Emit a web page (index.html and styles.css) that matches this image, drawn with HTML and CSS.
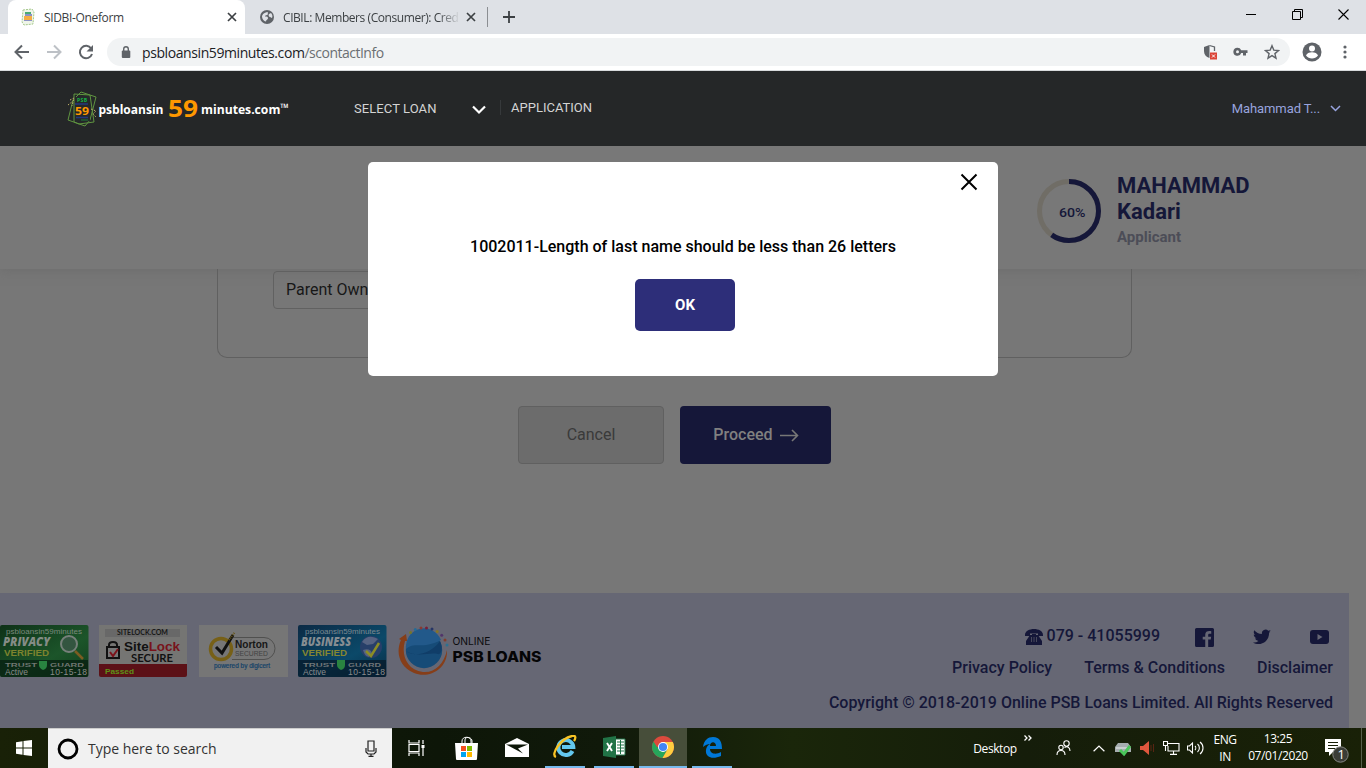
FILE: index.html
```html
<!DOCTYPE html>
<html lang="en">
<head>
<meta charset="utf-8">
<title>SIDBI-Oneform</title>
<link rel="stylesheet" href="styles.css">
</head>
<body>
<div class="screen">
<header class="tabs">
  <div class="tab active">
    <svg width="16" height="18" viewBox="0 0 16 18"><path d="M3 2l9-1 2 3-1 12-9 1-2-3z" fill="#eff5e8" stroke="#a5c88b" stroke-dasharray="2 1"/><path d="M5 4h6v2H5z" fill="#48ac73"/><path d="M5 6h7v2H5z" fill="#8c92c5"/><path d="M4 8h8v4H4z" fill="#f5ad43"/><path d="M4 12h8v1H4z" fill="#8c92c5"/></svg>
    <span class="title t1">SIDBI-Oneform</span>
    <svg class="x" width="10" height="10" viewBox="0 0 10 10"><path d="M1 1l8 8M9 1l-8 8" stroke="#3c4043" stroke-width="1.7"/></svg>
  </div>
  <div class="tab idle">
    <svg width="14" height="14" viewBox="0 0 14 14"><circle cx="7" cy="7" r="7" fill="#5f6368"/><path d="M2 6c1-3 4-4 6-4-1 1 1 2-1 3-1 .5-2 .2-2 1.500 2 0 3 0 3 2 0 1-2 1-2 3C3 11 2 8 2 6zM9 4l2-1c1 1 2 3 1 5-1 0-1-1-2-1S8 5 9 4z" fill="#dee1e6"/></svg>
    <span class="title t2">CIBIL: Members (Consumer): Cred</span>
    <svg class="x" width="10" height="10" viewBox="0 0 10 10"><path d="M1 1l8 8M9 1l-8 8" stroke="#3c4043" stroke-width="1.7"/></svg>
  </div>
  <i class="tabsep"></i>
  <svg class="plus" width="12" height="12" viewBox="0 0 12 12"><path d="M6 0v12M0 6h12" stroke="#3c4043" stroke-width="1.8"/></svg>
  <div class="winctl">
    <span><svg width="10" height="10" viewBox="0 0 10 10"><path d="M0 5.500h10" stroke="#000"/></svg></span>
    <span><svg width="11" height="11" viewBox="0 0 11 11" fill="none" stroke="#000"><path d="M.5 2.500h8v8h-8zM2.500 2V.5h8v8H9"/></svg></span>
    <span><svg width="11" height="11" viewBox="0 0 11 11"><path d="M.5.5l10 10M10.500.5l-10 10" stroke="#000" stroke-width="1.1"/></svg></span>
  </div>
</header>
<div class="toolbar">
  <span class="tb"><svg width="16" height="16" viewBox="0 0 16 16" fill="none" stroke="#5f6368" stroke-width="2"><path d="M15 8H2M8 1.500L1.500 8 8 14.500"/></svg></span>
  <span class="tb"><svg width="16" height="16" viewBox="0 0 16 16" fill="none" stroke="#bdc1c6" stroke-width="2"><path d="M1 8h13M8 1.500L14.500 8 8 14.500"/></svg></span>
  <span class="tb"><svg width="16" height="16" viewBox="0 0 16 16"><path d="M13.200 4.500A6.200 6.200 0 1 0 14 10" fill="none" stroke="#5f6368" stroke-width="2"/><path d="M15 1v6.500H8.500z" fill="#5f6368"/></svg></span>
  <div class="omni">
    <svg width="10" height="13" viewBox="0 0 10 13"><rect y="4.500" x=".8" width="8.500" height="7.500" rx="1" fill="#5f6368"/><path d="M2.700 5V3a2.300 2.300 0 0 1 4.600 0v2" fill="none" stroke="#5f6368" stroke-width="1.400"/></svg>
    <span class="url"><b>psbloansin59minutes.com</b>/scontactInfo</span>
    <span class="oi"><svg width="14" height="16" viewBox="0 0 14 16"><path d="M6.500 1L1 3v4c0 3.500 2 6 5.500 7z" fill="#5f6368"/><path d="M6.500 1.500L11.500 3v4" fill="none" stroke="#5f6368" stroke-width="1.300"/><path d="M7 8.500h7v7H7z" fill="#db4437"/><path d="M9 10.500l3 3m0-3l-3 3" stroke="#fff"/></svg></span>
    <span class="oi"><svg width="15" height="10" viewBox="0 0 15 10"><path d="M4.500.8A4 4 0 1 0 8.200 6H10v2.500h3V6h1.500V3.200H8.200A4 4 0 0 0 4.500.8z" fill="#5f6368"/><circle cx="4.500" cy="4.700" r="1.500" fill="#f1f3f4"/></svg></span>
    <span class="oi"><svg width="16" height="16" viewBox="0 0 16 16"><path d="M8 1.700l1.800 4.400 4.700.4-3.600 3.100 1.100 4.600L8 11.700l-4 2.500 1.100-4.600L1.500 6.500l4.700-.4z" fill="none" stroke="#5f6368" stroke-width="1.400"/></svg></span>
  </div>
  <svg class="avatar" width="20" height="20" viewBox="0 0 20 20"><circle cx="10" cy="10" r="9.500" fill="#5f6368"/><circle cx="10" cy="6.500" r="3" fill="#fff"/><path d="M4 13.500c1-4.500 11-4.500 12 0a7.500 7.500 0 0 1-12 0z" fill="#fff"/></svg>
  <svg class="dots" width="4" height="14" viewBox="0 0 4 14" fill="#5f6368"><circle cx="2" cy="2" r="1.600"/><circle cx="2" cy="7" r="1.600"/><circle cx="2" cy="12" r="1.600"/></svg>
</div>
<nav class="nav">
  <svg class="logo" width="224" height="38" viewBox="0 0 224 38">
    <g fill="none" stroke="#5f9440"><path d="M7 4l16 1 4 27-15 2-5-2z"/><path d="M9 7l5-5 15 5-6 23-5 6-17-6 5-20"/><path d="M3 10l4-2-2 8M1 15l5-4M24 19l5 2-3 3 3 3" stroke-dasharray="1.500 1.500" stroke="#c6b56b"/></g>
    <path d="M9 7h13l1 24-14 1z" fill="#25282a"/>
    <text x="10" y="12" class="lf" font-size="5" textLength="10" fill="#15b645">PSB</text>
    <path d="M8 14h13M9 27.500h12" stroke="#24377c" stroke-width="1.500"/><path d="M14 30h7" stroke="#1f7d39"/>
    <text x="8" y="24.500" class="lf" font-size="11" textLength="14" lengthAdjust="spacingAndGlyphs" fill="#ff9800">59</text>
    <text x="31.500" y="24" class="lf" font-size="13" textLength="65" lengthAdjust="spacingAndGlyphs" fill="#fff">psbloansin</text>
    <text x="101" y="26.500" class="lf" font-size="24" textLength="30" lengthAdjust="spacingAndGlyphs" fill="#ff9800">59</text>
    <text x="134" y="24" class="lf" font-size="13" textLength="88" lengthAdjust="spacingAndGlyphs" fill="#fff">minutes.com<tspan font-size="12" dy="-2">™</tspan></text>
  </svg>
  <span class="select">SELECT LOAN</span>
  <svg class="chev" width="14" height="10" viewBox="0 0 14 10"><path d="M1 1.500l6 6 6-6" fill="none" stroke="#fff" stroke-width="2.200"/></svg>
  <span class="app">APPLICATION</span>
  <span class="user">Mahammad T...</span>
  <svg width="11" height="7" viewBox="0 0 11 7"><path d="M1 1l4.500 4.500L10 1" fill="none" stroke="#98a4df" stroke-width="1.500"/></svg>
</nav>
<main class="page">
  <section class="profile">
    <svg width="66" height="66" viewBox="0 0 66 66"><circle cx="33" cy="33" r="29.500" fill="none" stroke="#706d66" stroke-width="5"/><circle cx="33" cy="33" r="29.500" fill="none" stroke="#151739" stroke-width="5" pathLength="100" stroke-dasharray="60 40" transform="rotate(-90 33 33)"/><text x="23" y="39" class="pct" textLength="26.500" lengthAdjust="spacingAndGlyphs">60%</text></svg>
    <div class="who"><strong>MAHAMMAD<br>Kadari</strong><span>Applicant</span></div>
  </section>
  <section class="card"><div class="field">Parent Owned</div></section>
  <div class="actions">
    <button class="cancel">Cancel</button>
    <button class="proceed">Proceed <svg width="19" height="13" viewBox="0 0 19 13"><path d="M0 6.500h17.500M12 1l5.500 5.500L12 12" fill="none" stroke="#777" stroke-width="1.600"/></svg></button>
  </div>
  <div class="modal">
    <svg class="close" width="18" height="18" viewBox="0 0 18 18"><path d="M1.500 1.500l15 15M16.500 1.500l-15 15" stroke="#000" stroke-width="2"/></svg>
    <p>1002011-Length of last name should be less than 26 letters</p>
    <button>OK</button>
  </div>
</main>
<footer class="footer">
  <div class="badges">
    <svg width="89" height="52" viewBox="0 0 89 52">
      <defs><linearGradient id="g" x2="1" y2="1"><stop offset="0" stop-color="#0d3117"/><stop offset=".6" stop-color="#1c552a"/><stop offset="1" stop-color="#123e1d"/></linearGradient><linearGradient id="b" x2="1" y2="1"><stop offset="0" stop-color="#0b2a45"/><stop offset=".6" stop-color="#0b4969"/><stop offset="1" stop-color="#092c45"/></linearGradient></defs>
      <rect width="88.500" height="52" rx="2" fill="url(#g)"/><path d="M0 35h88v15q0 2-2 2H2q-2 0-2-2z" fill="#071d10" opacity=".75"/>
      <text class="ls" x="6" y="8.500" font-size="8" textLength="76" fill="#7b8a7d">psbloansin59minutes</text>
      <text class="imp" x="3" y="21" font-size="12.500" textLength="47" lengthAdjust="spacingAndGlyphs" fill="#858c86">PRIVACY</text>
      <text class="lb" x="4" y="30.500" font-size="9" textLength="45" lengthAdjust="spacingAndGlyphs" fill="#7d842e">VERIFIED</text>
      <circle cx="69" cy="19" r="8" fill="#335540" stroke="#76807a" stroke-width="2"/><path d="M75 26l8 8" stroke="#7b5d22" stroke-width="2.500"/>
      <text class="lb" x="5" y="41.500" font-size="6" textLength="32" lengthAdjust="spacingAndGlyphs" fill="#707671">TRUST</text><path d="M39 36h8v4q0 4-4 5-4-2-4-5z" fill="#298340"/><text class="lb" x="50" y="41.500" font-size="6" textLength="34" lengthAdjust="spacingAndGlyphs" fill="#707671">GUARD</text>
      <text class="ls" x="5" y="50" font-size="8.500" textLength="23" fill="#8a8c8a">Active</text><text class="ls" x="50" y="50" font-size="8.500" textLength="37" fill="#8a8c8a">10-15-18</text>
    </svg>
    <svg width="88" height="52" viewBox="0 0 88 52">
      <path d="M0 0h88v40H0z" fill="#757573"/><path d="M6 4h75v8H6z" fill="#686868"/><path d="M0 39h88v11q0 2-2 2H2q-2 0-2-2z" fill="#5c1117"/>
      <text class="lt" x="18" y="10" font-size="7" textLength="51" lengthAdjust="spacingAndGlyphs" fill="#171717">SITELOCK.COM</text>
      <rect x="8" y="22" width="12" height="11" fill="#777" stroke="#111" stroke-width="2"/><path d="M10 22v-2c0-4 8-4 8 0v2" fill="none" stroke="#111" stroke-width="2"/><path d="M11 27l3 4 5-7" fill="none" stroke="#7c121a" stroke-width="2"/>
      <text class="lb" x="25" y="26" font-size="12" textLength="56" lengthAdjust="spacingAndGlyphs" fill="#111">Site<tspan fill="#78131b">Lock</tspan></text>
      <text class="lt" x="32" y="37" font-size="11" textLength="42" lengthAdjust="spacingAndGlyphs" fill="#111">SECURE</text>
      <text class="lb" x="6" y="49" font-size="8" textLength="29" lengthAdjust="spacingAndGlyphs" fill="#5e9018">Passed</text>
    </svg>
    <svg class="norton" width="89" height="52" viewBox="0 0 89 52">
      <path d="M0 0h89v52H0z" fill="#767676"/><path d="M33 12.500h32a10.500 10.500 0 0 1 0 22H33" fill="none" stroke="#50504f"/>
      <circle cx="22" cy="24" r="10.500" fill="#767676" stroke="#776017" stroke-width="3.500"/><path d="M17 22l6 6L34 10" fill="none" stroke="#111" stroke-width="3"/><path d="M30 15l6-8" stroke="#675416" stroke-dasharray="1 1" stroke-width="2"/>
      <text class="lb" x="36" y="23" font-size="10.500" textLength="33" lengthAdjust="spacingAndGlyphs" fill="#171717">Norton</text><text class="ls" x="36" y="31" font-size="7" textLength="33" lengthAdjust="spacingAndGlyphs" fill="#424242">SECURED</text><text class="ls" x="15" y="43" font-size="7" textLength="56" lengthAdjust="spacingAndGlyphs" fill="#124168" stroke="#124168" stroke-width=".2">powered by digicert</text>
    </svg>
    <svg width="89" height="52" viewBox="0 0 89 52">
      <rect width="88.500" height="52" rx="2" fill="url(#b)"/><path d="M0 35h88v15q0 2-2 2H2q-2 0-2-2z" fill="#071a29" opacity=".75"/>
      <text class="ls" x="7" y="8.500" font-size="8" textLength="75" fill="#7b8a91">psbloansin59minutes</text>
      <text class="imp" x="3" y="21" font-size="12.500" textLength="50" lengthAdjust="spacingAndGlyphs" fill="#868d92">BUSINESS</text>
      <text class="lb" x="4" y="30.500" font-size="9" textLength="45" lengthAdjust="spacingAndGlyphs" fill="#858631">VERIFIED</text>
      <circle cx="73" cy="22" r="11" fill="#273f69"/><path d="M64 17c5-8 12-5 16-3l-5 5-6 1zM65 25c5-2 8 0 9 3l-3 4c-4-1-5-4-6-7z" fill="#566382"/><path d="M68 26l5 5 8-13" fill="none" stroke="#8b8d26" stroke-width="2.500"/>
      <text class="lb" x="5" y="41.500" font-size="6" textLength="32" lengthAdjust="spacingAndGlyphs" fill="#707679">TRUST</text><path d="M39 35h8v5q0 4-4 5-4-2-4-5z" fill="#298340"/><text class="lb" x="50" y="41.500" font-size="6" textLength="33" lengthAdjust="spacingAndGlyphs" fill="#707679">GUARD</text>
      <text class="ls" x="5" y="50" font-size="8.500" textLength="23" fill="#8a8c8e">Active</text><text class="ls" x="50" y="50" font-size="8.500" textLength="37" fill="#8a8c8e">10-15-18</text>
    </svg>
    <svg class="psb" width="146" height="52" viewBox="0 0 146 52">
      <circle cx="26" cy="25" r="18.200" fill="#164b77"/><path d="M8 24c9-8 16 1 35-9A18.200 18.200 0 0 0 8 24z" fill="#22598a"/><path d="M8 26c9 7 26 2 34-10 4 9 0 14-2 13-10-2-20 4-32-3z" fill="#103d68"/>
      <path d="M1 14l7-5 1 7-2 0C3 29 8 45 25 47c12 1 21-8 24-22C50 44 31 54 16 48 0 41-2 26 3 15z" fill="#863e19"/>
      <circle cx="12.500" cy="7.500" r="1.500" fill="#757728"/><circle cx="17.300" cy="4.600" r="1.500" fill="#246b96"/><circle cx="23" cy="3" r="1.500" fill="#883a31"/><circle cx="28.500" cy="3" r="1.500" fill="#771f39"/><circle cx="34" cy="4" r="1.500" fill="#253465"/><circle cx="39.200" cy="6.600" r="1.500" fill="#847526"/><circle cx="43.700" cy="10.200" r="1.500" fill="#51346a"/><circle cx="47" cy="15" r="1.500" fill="#843d2b"/><circle cx="49" cy="20" r="1.500" fill="#2c7190"/>
      <text class="lo" x="54.500" y="20" font-size="10.500" textLength="38" lengthAdjust="spacingAndGlyphs" fill="#0b0b0d">ONLINE</text><text class="lx" x="54.500" y="37" font-size="14.500" textLength="89" lengthAdjust="spacingAndGlyphs" fill="#050506">PSB LOANS</text>
    </svg>
  </div>
  <div class="info">
    <div class="row social">
      <svg width="18" height="16" viewBox="0 0 18 16" fill="#151739"><path d="M0 6c0-8 18-8 18 0v1h-5V4.500H5V7H0zM5 6h2V5h4v1h2l4 6v4H1v-4z"/><path d="M6.500 8v5M9 8v5M11.500 8v5" stroke="#555765" stroke-width=".8"/></svg>
      <span class="phone">079 - 41055999</span>
      <svg width="19" height="19" viewBox="0 0 18 18"><path d="M1.500 0h15Q18 0 18 1.500v15q0 1.500-1.500 1.500h-4v-7h2.400l.4-2.800h-2.800V6.700c0-1 .4-1.300 1.400-1.300h1.500V3c-3-.5-5.700.1-5.700 3.300v1.900H7.300V11h2.400v7H1.500Q0 18 0 16.500v-15Q0 0 1.500 0z" fill="#151739"/></svg>
      <svg class="tw" width="18" height="16" viewBox="0 0 24 20"><path d="M24 2.400c-.9.400-1.800.7-2.800.8 1-.6 1.800-1.600 2.200-2.700-1 .6-2 1-3.100 1.200A4.900 4.900 0 0 0 11.900 6C7.800 5.900 4.200 3.900 1.700.9.400 3.200 1.100 6 3.200 7.400c-.8 0-1.600-.2-2.200-.6 0 2.300 1.600 4.400 3.900 4.900-.7.200-1.500.2-2.200.1.600 2 2.400 3.300 4.600 3.400A9.900 9.900 0 0 1 0 17.200c8.300 5.300 21.500.4 21.500-13 1-.7 1.800-1.600 2.500-1.800z" fill="#151739"/></svg>
      <svg width="19" height="14" viewBox="0 0 19 14"><rect width="19" height="14" rx="3" fill="#151739"/><path d="M7.500 4l5 3-5 3z" fill="#666774"/></svg>
    </div>
    <div class="row links"><span>Privacy Policy</span><span>Terms &amp; Conditions</span><span>Disclaimer</span></div>
    <div class="row copy">Copyright © 2018-2019 Online PSB Loans Limited. All Rights Reserved</div>
  </div>
</footer>
<div class="taskbar">
  <span class="start"><svg width="16" height="16" viewBox="0 0 16 16" fill="#fff"><path d="M0 2.200l6.500-.9v6.200H0zM7.500 1.100L16 0v7.500H7.500zM0 8.500h6.500v6.200L0 13.800zM7.500 8.500H16V16l-8.500-1.100z"/></svg></span>
  <div class="search"><svg width="22" height="22" viewBox="0 0 22 22"><circle cx="11" cy="11" r="9" fill="none" stroke="#000" stroke-width="2.800"/></svg><span>Type here to search</span>
    <svg width="12" height="17" viewBox="0 0 12 17" fill="none" stroke="#222" stroke-width="1.200"><path d="M3 1h6v10H3zM1 8v4l2 2h6l2-2V8M6 14v2.500M3.500 16.400h5"/></svg></div>
  <span class="ti"><svg width="17" height="16" viewBox="0 0 17 16" fill="none" stroke="#fff" stroke-width="1.200"><path d="M1 0v3h10V0M1 16v-3h10v3M1 4.500h10v7H1zM15 0v4M15 8v8"/><path d="M13.500 5h3v3h-3z" fill="#fff" stroke="none"/></svg></span>
  <span class="ti store"><svg width="23" height="24" viewBox="0 0 23 24"><path d="M7 7V5c0-5 9-5 9 0v2M10 7V4c0-4 7-3 7 1v2" fill="none" stroke="#fff"/><path d="M0 7h23l-1 16q0 1-1 1H2q-1 0-1-1z" fill="#fff"/><path d="M6 10h5v5H6z" fill="#f25022"/><path d="M12 10h5v5h-5z" fill="#7fba00"/><path d="M6 16h5v5H6z" fill="#00a4ef"/><path d="M12 16h5v5h-5z" fill="#ffb900"/></svg></span>
  <span class="ti mail"><svg width="24" height="20" viewBox="0 0 24 20"><path d="M0 6L12 0l12 6v13H0z" fill="#fff"/><path d="M1 6.500h22l-10 4 5 5z" fill="#0d1608"/></svg></span>
  <span class="ti run ie"><svg width="24" height="24" viewBox="0 0 24 24"><path d="M19.500 16a7.500 7.500 0 1 1 .8-4H9" fill="none" stroke="#63c8ef" stroke-width="4"/><path d="M3 22C-3 20 8 3 19 1c4-1 4 2 2 5" fill="none" stroke="#f7c325" stroke-width="2.300"/></svg></span>
  <span class="ti run excel"><svg width="23" height="22" viewBox="0 0 23 22"><path d="M12 3h10v16H12z" fill="#fff" stroke="#217346"/><path d="M14 6h7M14 9h7M14 12h7M14 15h7M17.500 4v14" stroke="#217346"/><path d="M0 2l13-2v22L0 20z" fill="#217346"/><path d="M4 7l5 8M9 7l-5 8" stroke="#fff" stroke-width="1.900"/></svg></span>
  <span class="ti run chrome"><svg width="22" height="22" viewBox="0 0 22 22"><circle cx="11" cy="11" r="11" fill="#db4a3d"/><path d="M1.500 5.500A11 11 0 0 0 10.500 22l5-8.500L11 11H5z" fill="#26a65b"/><path d="M11 6h9.800A11 11 0 0 1 10.500 22l5-8.500z" fill="#ffcd40"/><circle cx="11" cy="11" r="5" fill="#fff"/><circle cx="11" cy="11" r="4.100" fill="#4285f4"/></svg></span>
  <span class="ti run edge"><svg width="21" height="21" viewBox="0 0 21 21"><path d="M1 10C2 3 6 0 11 0c7 0 9 5 9 12H8c0 5 6 6 11 3v4C10 23 3 20 4 13c.3-3 2-5 4-6-2 0-5 1-7 3zm7-1h6c0-5-6-5-6 0z" fill="#0078d7"/></svg></span>
  <div class="tray">
    <span class="desk">Desktop</span><svg class="more" width="8" height="6" viewBox="0 0 8 6"><path d="M.5.500L3 3 .5 5.500M4.500.5L7 3 4.500 5.500" fill="none" stroke="#fff" stroke-width="1.300"/></svg>
    <svg class="people" width="15" height="16" viewBox="0 0 15 16" fill="none" stroke="#fff" stroke-width="1.100"><circle cx="10.500" cy="3.500" r="2.700"/><circle cx="5" cy="7.500" r="2.200"/><path d="M1 15c0-6 8-6 8 0M8.500 7.500c3-2 5.500 0 5.500 3.500"/></svg>
    <svg class="up" width="12" height="7" viewBox="0 0 12 7"><path d="M.6 6.300L6 1l5.400 5.300" fill="none" stroke="#fff" stroke-width="1.200"/></svg>
    <svg class="usb" width="16" height="15" viewBox="0 0 16 15"><path d="M3 2h10l3 4v5H0V6z" fill="#a6adb0"/><path d="M1 7h14" stroke="#e9eeee"/><path d="M5 9l4 4 6-8" fill="none" stroke="#4ac65a" stroke-width="3"/></svg>
    <svg class="red" width="14" height="14" viewBox="0 0 14 14"><path d="M0 5h3l6-5v14L3 9H0z" fill="#df573d"/><path d="M11 4v6M13.500 3v8" stroke="#592413"/></svg>
    <svg class="net" width="17" height="14" viewBox="0 0 17 14" fill="none" stroke="#fff" stroke-width="1.100"><path d="M4.500 2.500H16v7.500H5V5M10.500 10v3M7 13.400h7M.5.500h4v4h-4zM2.500 4.500V10"/></svg>
    <svg class="vol" width="17" height="14" viewBox="0 0 17 14" fill="none" stroke="#fff" stroke-width="1.100"><path d="M.5 5h2l3-3v10l-3-3h-2zM8 5c1 1 1 3 0 4M10.500 3c2.500 2 2.500 6 0 8M13 1c4 3 4 9 0 12"/></svg>
    <span class="lang">ENG<br>IN</span><span class="clock">13:25<br>07/01/2020</span>
    <svg class="note" width="26" height="27" viewBox="0 0 26 27"><path d="M1 2h16v13H9l-4 4v-4H1z" fill="#fff"/><path d="M4 5.500h10M4 8.500h10M4 11.500h7" stroke="#182008"/><circle cx="16.500" cy="17.500" r="7.700" fill="#3a3d37" stroke="#858784"/><text x="13.500" y="22" class="one">1</text></svg>
    <i class="peek"></i>
  </div>
</div>
</div>
</body>
</html>
```
FILE: styles.css
```css
* { box-sizing: border-box; }
body { margin: 0; font-family: Roboto, "Liberation Sans", sans-serif; background: #777; }
svg { display: block; flex: none; }
button { font-family: inherit; border: 0; margin: 0; padding: 0; }
.screen { width: 1366px; height: 768px; display: flex; flex-direction: column; overflow: hidden; }

.tabs { height: 34px; background: #dee1e6; display: flex; align-items: center; padding-left: 8px; font-family: "Open Sans", sans-serif; font-size: 12px; color: #3c4043; flex: none; }
.tab { height: 34px; display: flex; align-items: center; }
.tab.active { width: 237px; background: #fff; border-radius: 8px 8px 0 0; padding: 0 8px 0 12px; }
.tab.idle { width: 231px; padding-left: 15px; }
.title { white-space: nowrap; margin-left: 8px; }
.t1 { width: 178px; letter-spacing: -0.35px; }
.t2 { margin-left: 9px; width: 177px; letter-spacing: -0.43px; -webkit-mask-image: linear-gradient(90deg, #000 88%, transparent); mask-image: linear-gradient(90deg, #000 88%, transparent); }
.tab .x { margin-left: 5px; }
.idle .x { margin-left: 6px; }
.tabsep { width: 1px; height: 20px; background: #8b8e92; margin-left: 11px; }
.plus { margin-left: 15px; }
.winctl { margin-left: auto; display: flex; margin-bottom: 6px; }
.winctl span { width: 46px; display: flex; justify-content: center; }

.toolbar { height: 37px; background: #fff; border-bottom: 1px solid #d7dadc; display: flex; align-items: center; padding-left: 6px; flex: none; }
.tb { width: 32px; display: flex; justify-content: center; }
.omni { margin-left: 5px; width: 1183px; height: 28px; border-radius: 14px; background: #f1f3f4; display: flex; align-items: center; padding: 0 3px 0 14px; }
.url { flex: 1; margin-left: 11px; font: 14px "Open Sans", sans-serif; letter-spacing: -0.5px; color: #6b6f73; }
.url b { font-weight: 400; color: #202124; letter-spacing: -0.41px; }
.oi { width: 31px; display: flex; justify-content: center; }
.avatar { margin-left: 12px; }
.dots { margin-left: 21px; }

.nav { height: 75px; background: #252728; display: flex; align-items: center; padding: 0 25px 0 67px; flex: none; font-size: 13px; color: #d4d4d4; position: relative; z-index: 1; }
.lf { font-family: "Open Sans", sans-serif; font-weight: 700; }
.select { margin-left: 63px; width: 118px; letter-spacing: 0.08px; }
.chev { margin-top: 3px; }
.app { margin-left: 14px; border-left: 1px solid #36393b; padding-left: 10px; margin-top: -2px; }
.user { margin-left: auto; margin-right: 10px; color: #98a4df; letter-spacing: -0.1px; }

.page { height: 447px; flex: none; position: relative; }
.profile { height: 123px; background: #787878; box-shadow: 0 2px 10px #66666680; display: flex; padding: 32px 0 0 1036px; }
.pct { font: 500 13.5px Roboto, sans-serif; fill: #151739; }
.who { margin-left: 15px; }
.who strong { display: block; margin-top: -5px; font-size: 22px; font-weight: 700; line-height: 26px; color: #151739; }
.who span { display: block; margin-top: 3px; font-size: 15px; line-height: 18px; font-weight: 700; color: #4c4d57; }
.card { width: 915px; height: 89px; margin-left: 217px; border: 1px solid #606060; border-top: 0; border-radius: 0 0 10px 10px; padding: 2px 0 0 55px; }
.field { width: 380px; height: 38px; border: 1px solid #616161; border-radius: 4px; padding: 0 12px; font-size: 16px; line-height: 36px; color: #171717; }
.actions { display: flex; gap: 16px; margin: 48px 0 0 518px; }
.cancel, .proceed { height: 58px; border-radius: 4px; font-size: 16px; padding-bottom: 2px; }
.cancel { width: 146px; background: #6c6c6c; border: 1px solid #606060; color: #3a3a3a; }
.proceed { width: 151px; background: #151739; color: #808080; display: flex; align-items: center; justify-content: center; gap: 7px; font-weight: 500; padding-left: 1px; }
.proceed svg { margin-top: 3px; }
.modal { position: absolute; left: 368px; top: 16px; width: 630px; height: 214px; background: #fff; border-radius: 5px; display: flex; flex-direction: column; align-items: center; }
.close { align-self: flex-end; margin: 11px 20px 0 0; }
.modal p { margin: 46px 0 0; font-size: 16px; line-height: 20px; font-weight: 500; color: #000; }
.modal button { width: 100px; height: 52px; margin: 22px 0 0 4px; border-radius: 5px; background: #2d2e79; color: #fff; font-weight: 700; font-size: 15px; }

.footer { width: 1349px; height: 135px; background: #666774; flex: none; display: flex; justify-content: space-between; color: #151739; }
.badges { display: flex; gap: 10px; padding-top: 32px; }
.badges .norton { margin-left: 2px; }
.badges .psb { margin-left: 1px; }
.ls { font-family: "Liberation Sans", sans-serif; }
.lb { font-family: "Liberation Sans", sans-serif; font-weight: 700; }
.imp { font-family: "Open Sans", sans-serif; font-weight: 800; font-style: italic; }
.lt { font-family: Lato, sans-serif; font-weight: 700; }
.lo { font-family: Inter, sans-serif; font-weight: 400; }
.lx { font-family: Inter, sans-serif; font-weight: 800; }
.info { padding-right: 16px; font-size: 16px; font-weight: 500; }
.row { display: flex; justify-content: flex-end; align-items: center; white-space: nowrap; }
.social { height: 22px; margin-top: 32px; padding-right: 4px; }
.social svg { margin-top: 2px; }
.phone { margin: -1px 35px 0 4px; }
.tw { margin-left: 39px; margin-right: 39px; }
.links { gap: 32px; height: 20px; margin-top: 10px; }
.copy { height: 20px; margin-top: 15px; }

.taskbar { height: 40px; background: linear-gradient(90deg, #192107, #0d1608 32%, #10190a 44%, #1a260a 58%, #151d0a 75%, #192107); flex: none; display: flex; font-family: "Open Sans", sans-serif; color: #fff; }
.start { width: 48px; display: flex; align-items: center; justify-content: center; }
.search { width: 344px; background: #f1f1f1; border-top: 1px solid #ccc; display: flex; align-items: center; padding: 0 15px 0 9px; font-size: 14px; color: #333; }
.search span { flex: 1; margin-left: 9px; letter-spacing: -0.02px; }
.ti { width: 49px; height: 40px; display: flex; align-items: center; justify-content: center; }
.store { width: 51px; }
.run { border-bottom: 2px solid #76b9ed; }
.ie, .excel, .edge { width: 40px; }
.ie { margin-left: 4px; }
.excel { margin-left: 9px; }
.chrome { width: 48px; margin-left: 5px; background: #474e3a; }
.edge { margin-left: 5px; }
.tray { flex: 1; display: flex; align-items: center; font-size: 12px; letter-spacing: -0.4px; line-height: 17px; text-align: center; }
.desk { margin-left: 241px; width: 44px; }
.more { margin: -20px 0 0 7px; }
.people { margin-left: 24px; }
.up { margin-left: 22px; }
.usb { margin-left: 10px; }
.red { margin-left: 9px; }
.net { margin-left: 9px; }
.vol { margin-left: 7px; }
.lang { width: 30px; margin-left: 6px; }
.clock { width: 66px; margin-left: 5px; margin-top: -2px; }
.note { margin: 5px 0 0 13px; }
.one { font: 13px "Open Sans", sans-serif; fill: #fff; }
.peek { width: 1px; height: 40px; background: #55604a; margin-left: auto; margin-right: 4px; }
```
